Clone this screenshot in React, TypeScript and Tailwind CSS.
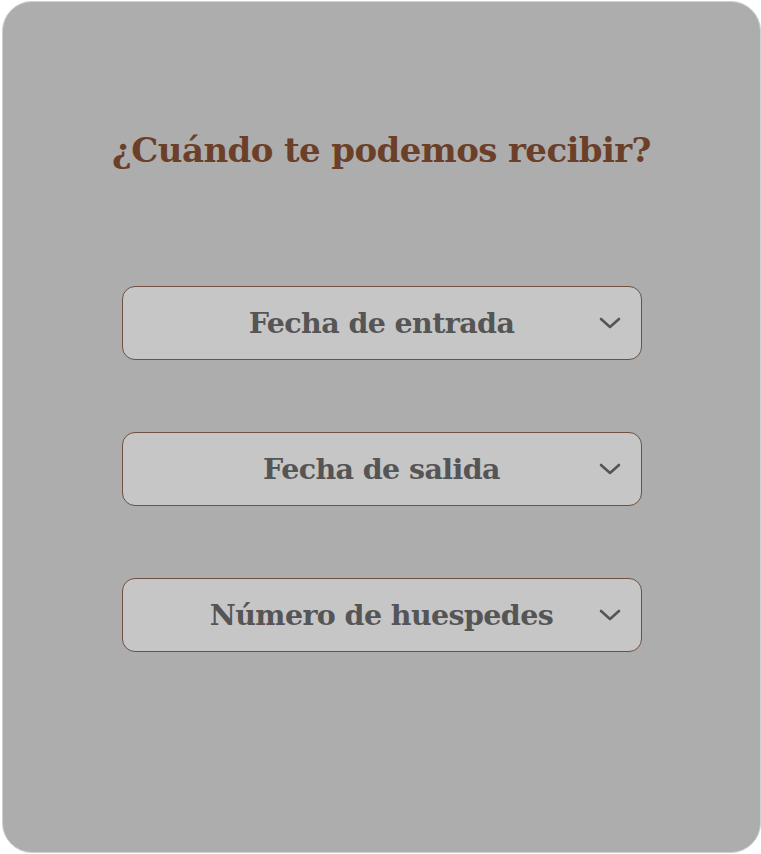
import React from "react";

function Chevron() {
  return (
    <svg width="22" height="14" viewBox="0 0 22 14" fill="none" className="absolute right-[20px] top-1/2 -translate-y-1/2">
      <path d="M2 3 L11 11 L20 3" stroke="#555555" strokeWidth="2.6" strokeLinecap="round" strokeLinejoin="round" />
    </svg>
  );
}

function Select({ label }: { label: string }) {
  return (
    <div className="relative w-[520px] h-[74px] rounded-[13px] border-[1.5px] border-[#705040] bg-[#c6c6c6] flex items-center justify-center">
      <span className="text-[28.5px] font-bold text-[#555555] leading-none tracking-[-0.6px]" style={{ fontFamily: '"DejaVu Serif", serif' }}>{label}</span>
      <Chevron />
    </div>
  );
}

export default function App() {
  return (
    <div className="w-[761px] h-[854px] bg-white pl-[2px] pt-[1px]">
      <div className="w-[759px] h-[852px] rounded-[30px] bg-[#adadad] border border-[#d0d0d0] flex flex-col items-center">
        <h1 className="mt-[131px] text-[34px] font-bold text-[#6b3f28] leading-none tracking-[-0.6px]" style={{ fontFamily: '"DejaVu Serif", serif' }}>
          ¿Cuándo te podemos recibir?
        </h1>
        <div className="mt-[119px] flex flex-col gap-[72px]">
          <Select label="Fecha de entrada" />
          <Select label="Fecha de salida" />
          <Select label="Número de huespedes" />
        </div>
      </div>
    </div>
  );
}
